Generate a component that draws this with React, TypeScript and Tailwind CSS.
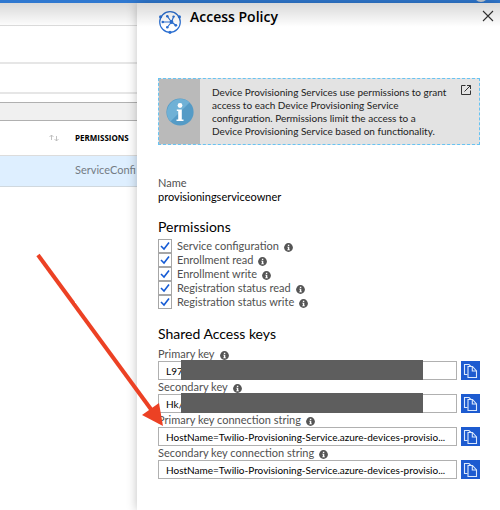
import React from "react";

function InfoDot() {
  return (
    <svg viewBox="0 0 16 16" className="mt-[3px] size-[9px] shrink-0" role="img" aria-label="More information">
      <circle cx="8" cy="8" r="7.8" fill="#555" />
      <path d="M6.9 3h2.5v2.2H6.9zM5.8 6.6h3.6v4.8h1.1V13H5.7v-1.6h1.2V8.1H5.8z" fill="#fff" />
    </svg>
  );
}

function ServiceIcon() {
  return (
    <svg viewBox="0 0 24 24" className="size-6 shrink-0" fill="none" stroke="#2b6fd1" strokeWidth="1.2" aria-hidden="true">
      <circle cx="12" cy="12" r="10.3" />
      <path d="M13.500 12H5M13.500 12 9.500 6.500M13.500 12 15.500 7M13.500 12 17.500 15M13.500 12 9.500 17" />
      <g fill="#2b6fd1" stroke="none">
        <circle cx="13.5" cy="12" r="1.9" />
        <circle cx="4.800" cy="12" r="1.3" />
        <circle cx="9.300" cy="6.300" r="1.3" />
        <circle cx="15.600" cy="6.600" r="1.2" />
        <circle cx="17.800" cy="15.300" r="1.4" />
        <circle cx="9.300" cy="17.200" r="1.3" />
        <circle cx="2.6" cy="6.8" r="1.6" />
        <circle cx="21.4" cy="6.8" r="1.6" />
        <circle cx="12" cy="22.3" r="1.6" />
      </g>
    </svg>
  );
}

function CopyIcon() {
  return (
    <svg viewBox="0 0 19 19" className="size-[19px]" fill="none" stroke="#dce9fb" strokeWidth="1.1" aria-hidden="true">
      <path d="M6.500 13.500h-3v-10h4.500l2.500 2.500" />
      <path d="M7 5.500h4.500l4 4.500v6.500H7z" fill="#1d5bd0" />
      <path d="M11.300 5.500V10h4.200" />
    </svg>
  );
}

const permissions = [
  "Service configuration",
  "Enrollment read",
  "Enrollment write",
  "Registration status read",
  "Registration status write",
];

const connection = "HostName=Twilio-Provisioning-Service.azure-devices-provisio...";

const keys = [
  { id: "primary", label: "Primary key", value: "L97", masked: true },
  { id: "secondary", label: "Secondary key", value: "Hk/", masked: true },
  { id: "primary-conn", label: "Primary key connection string", value: connection, masked: false },
  { id: "secondary-conn", label: "Secondary key connection string", value: connection, masked: false },
];

function PolicyList() {
  return (
    <section className="w-[137px] shrink-0 overflow-hidden whitespace-nowrap">
      <div className="h-[23px] border-b border-[#dcdcdc]" />
      <div className="h-[38px] border-b-2 border-[#e6e6e6]" />
      <div className="h-[30px] border-b-2 border-[#e6e6e6]" />
      <div className="h-2" />
      <div className="h-[19px] border-y border-[#b0b0b0] bg-[#f0f0f0]" />
      <table className="w-full table-fixed border-collapse text-left">
        <thead>
          <tr className="h-[34px] border-b border-[#dcdcdc]">
            <th className="w-[75px] pr-4">
              <svg viewBox="0 0 10 8" className="ml-auto h-2 w-[10px]" fill="none" stroke="#bbb" strokeWidth="0.9" aria-hidden="true">
                <path d="M2.500 6V1M.5 3l2-2 2 2M7.500 2v5M5.500 5l2 2 2-2" />
              </svg>
            </th>
            <th className="font-['Open_Sans',sans-serif] text-[8px] font-bold text-black">PERMISSIONS</th>
          </tr>
        </thead>
        <tbody>
          <tr className="h-[31px] border-b border-[#d0d8de] bg-[#deefff]">
            <td />
            <td className="text-[11px] text-[#747c84]">ServiceConfi</td>
          </tr>
        </tbody>
      </table>
    </section>
  );
}

export default function App() {
  return (
    <div className="relative min-h-screen overflow-hidden bg-white font-['Lato',sans-serif] text-[11px] text-[#505050]">
      <header className="flex h-[3px] justify-end overflow-hidden bg-[#2f78d0] pr-3">
        <span className="-mt-3 size-[14px] rounded-full bg-[#c5ccd4]" />
      </header>
      <div className="flex">
        <PolicyList />
        <main className="min-h-[507px] min-w-0 flex-1 bg-white pr-5 pl-[21px] shadow-[0_0_10px_rgba(0,0,0,0.25)]">
          <div className="flex pt-[7px]">
            <ServiceIcon />
            <h1 className="ml-2 flex-1 font-['Open_Sans',sans-serif] text-[14px] leading-[14px] font-semibold text-black">Access Policy</h1>
            <button aria-label="Close" className="-mr-[14px] flex h-3 items-start">
              <svg viewBox="0 0 12 12" className="size-3" stroke="#333" strokeWidth="1.100" aria-hidden="true">
                <path d="m1 1 10 10M11 1 1 11" />
              </svg>
            </button>
          </div>

          <aside className="mt-11 flex h-[67px] border border-dashed border-[#67c3f3] bg-[#e3e3e3]">
            <div className="flex w-[41px] shrink-0 items-center justify-center bg-[#bababa]">
              <svg viewBox="0 0 28 28" className="size-7" aria-hidden="true">
                <circle cx="14" cy="14" r="13.600" fill="#559bc6" />
                <path d="M4.400 23.600A13.600 13.600 0 0 1 23.600 4.400z" fill="#6fb1d6" />
                <circle cx="14" cy="7.500" r="2.400" fill="#fff" />
                <path d="M10.800 11.500h5v10h1.700v1.500h-7v-1.500h1.700V13h-1.400z" fill="#fff" />
              </svg>
            </div>
            <p className="py-[7px] pl-3 text-[10px] leading-[13px] whitespace-nowrap text-[#222]">
              Device Provisioning Services use permissions to grant
              <br />
              access to each Device Provisioning Service
              <br />
              configuration. Permissions limit the access to a
              <br />
              Device Provisioning Service based on functionality.
            </p>
            <a href="#permissions" aria-label="Open documentation" className="mt-[6px] mr-2 ml-auto size-[10px]">
              <svg viewBox="0 0 10 10" className="size-[10px]" fill="none" stroke="#333" aria-hidden="true">
                <path d="M4.500.5h-4v9h9v-4M6 .5h3.500V4M9.500.5l-6 6" />
              </svg>
            </a>
          </aside>

          <dl className="mt-[31px] leading-[14px]">
            <dt>Name</dt>
            <dd className="text-black">provisioningserviceowner</dd>
          </dl>

          <fieldset id="permissions" className="mt-[15px]">
            <legend className="pb-1 text-[14px] leading-4 text-black">Permissions</legend>
            {permissions.map((name) => (
              <label key={name} className="flex h-[14px] items-center gap-[5px] leading-[14px]">
                <span className="grid size-[14px] shrink-0 place-items-center">
                  <input
                    type="checkbox"
                    defaultChecked
                    className="peer col-start-1 row-start-1 size-[14px] appearance-none border border-[#a6a6a6] bg-white"
                  />
                  <svg
                    viewBox="0 0 10 10"
                    className="pointer-events-none invisible col-start-1 row-start-1 size-[10px] peer-checked:visible"
                    fill="none"
                    stroke="#155bd5"
                    strokeWidth="1.600"
                    aria-hidden="true"
                  >
                    <path d="m1 5 3 3 5-6.500" />
                  </svg>
                </span>
                {name}
                <InfoDot />
              </label>
            ))}
          </fieldset>

          <section>
            <h2 className="mt-[17px] mb-[5px] text-[14px] leading-4 text-black">Shared Access keys</h2>
            {keys.map((key) => (
              <div key={key.id}>
                <label htmlFor={key.id} className="flex h-[14px] items-center gap-[5px] leading-[14px]">
                  {key.label}
                  <InfoDot />
                </label>
                <div className="flex gap-1">
                  <div className="relative min-w-0 flex-1">
                    <input
                      id={key.id}
                      readOnly
                      defaultValue={key.value}
                      className="block h-[19px] w-full border border-[#b0b0b0] bg-white px-[7px] text-[10px] text-ellipsis text-black"
                    />
                    {key.masked && <span className="absolute -top-px right-[34px] bottom-0 left-[23px] bg-[#5e5e5e]" />}
                  </div>
                  <button aria-label={"Copy " + key.label} className="size-[19px] bg-[#1d5bd0]">
                    <CopyIcon />
                  </button>
                </div>
              </div>
            ))}
          </section>
        </main>
      </div>
      <div className="pointer-events-none absolute inset-x-0 top-[3px] h-6 bg-linear-to-b from-black/15 to-transparent" />
      <svg viewBox="0 0 500 510" className="pointer-events-none absolute top-0 left-0 h-[510px] w-[500px]" aria-hidden="true">
        <path d="M38 255 153 412" stroke="#ec4124" strokeWidth="4" />
        <path d="m163 426-21-11 17-12z" fill="#ec4124" />
      </svg>
    </div>
  );
}
